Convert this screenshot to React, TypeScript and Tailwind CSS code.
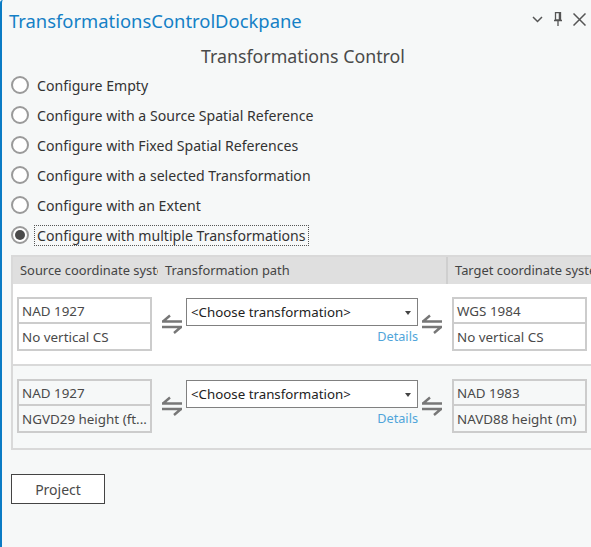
const font = { fontFamily: '"Noto Sans", sans-serif' };

const options = [
  "Configure Empty",
  "Configure with a Source Spatial Reference",
  "Configure with Fixed Spatial References",
  "Configure with a selected Transformation",
  "Configure with an Extent",
  "Configure with multiple Transformations",
];

const rows = [
  { source: ["NAD 1927", "No vertical CS"], target: ["WGS 1984", "No vertical CS"], bg: "bg-white", cellBg: "bg-white" },
  { source: ["NAD 1927", "NGVD29 height (ft..."], target: ["NAD 1983", "NAVD88 height (m)"], bg: "bg-[#f6f8f8]", cellBg: "bg-[#f6f8f8]" },
];

const SwapIcon = () => (
  <svg width="20" height="22" viewBox="0 0 20 22" fill="none" stroke="#777" strokeWidth="2.4" className="shrink-0">
    <path d="M0 9.5h20M1 9.5l7-6" />
    <path d="M0 15h20M19 15l-7 6" />
  </svg>
);

const CrsBox = ({ lines, bg }: { lines: string[]; bg: string }) => (
  <div className={`w-[135px] h-[54px] shrink-0 flex flex-col border-2 border-[#cccccc] ${bg}`}>
    <div className="h-[25px] pl-[3px] border-b-2 border-[#cccccc] text-[13.4px] leading-[24px] text-[#4a4a4a] whitespace-nowrap">{lines[0]}</div>
    <div className="h-[25px] pl-[3px] text-[13.4px] leading-[27px] text-[#4a4a4a] whitespace-nowrap">{lines[1]}</div>
  </div>
);

const App = () => (
  <div className="w-[591px] h-[547px] overflow-hidden bg-[#f6f8f8] border-l-2 border-[#0a7bc4] rounded-tl-[3px] flex flex-col" style={font}>
    {/* dockpane title */}
    <div className="h-[42px] flex items-center pl-[7px] pr-[5px] shrink-0">
      <span className="text-[18.4px] text-[#1480c6] flex-1">TransformationsControlDockpane</span>
      <div className="flex items-center gap-[10px] -mt-[4px]">
        <svg width="11" height="7" viewBox="0 0 11 7" fill="none" stroke="#555" strokeWidth="1.5"><path d="M1 1l4.5 4.5L10 1" /></svg>
        <svg width="10" height="14" viewBox="0 0 10 14" fill="none" stroke="#555"><path d="M2.5 .5h5v7.5h-5zM1 8.5h8M5 9v5" strokeWidth="1.3" /><path d="M6.5 1v7" strokeWidth="1.5" /></svg>
        <svg width="13" height="13" viewBox="0 0 13 13" fill="none" stroke="#555" strokeWidth="1.5"><path d="M.5.5l12 12M12.5.5l-12 12" /></svg>
      </div>
    </div>

    <div className="h-[28px] text-center text-[17.8px] leading-[29px] text-[#4a4a4a] shrink-0 pl-[13px]">Transformations Control</div>

    {/* radio group */}
    <div className="flex flex-col pl-[9px] shrink-0">
      {options.map((o, i) => {
        const on = i === options.length - 1;
        return (
          <div key={o} className="h-[30px] flex items-center">
            <span className="w-[18px] h-[18px] rounded-full border-2 border-[#9a9a9a] bg-white flex items-center justify-center shrink-0">
              {on && <span className="w-[10px] h-[10px] rounded-full bg-[#4a4a4a]" />}
            </span>
            <span className={`ml-[5px] text-[14.1px] leading-[19px] text-[#333] whitespace-nowrap px-[2px] border border-dotted ${on ? "border-[#555]" : "border-transparent"}`}>{o}</span>
          </div>
        );
      })}
    </div>

    {/* transformations table */}
    <div className="ml-[9px] mt-[5px] w-[600px] shrink-0 border-2 border-[#d9d9d9] border-r-0">
      <div className="h-[27px] bg-[#dfdfdf] flex text-[12.9px] leading-[27px] text-[#444]">
        <div className="w-[152px] pl-[7px]">
          <div className="w-[138px] overflow-hidden whitespace-nowrap">Source coordinate system</div>
        </div>
        <div className="w-[283px] border-r-2 border-[#cfcfcf]">Transformation path</div>
        <div className="flex-1 pl-[7px] whitespace-nowrap overflow-hidden">Target coordinate system</div>
      </div>
      {rows.map((r, i) => (
        <div key={i} className={`h-[82px] flex pl-[4px] pt-[13px] ${r.bg} ${i === 0 ? "border-b-2 border-[#d9d9d9]" : ""}`}>
          <CrsBox lines={r.source} bg={r.cellBg} />
          <div className="w-[34px] flex pl-[10px] pt-[15px]"><SwapIcon /></div>
          <div className="w-[232px] shrink-0 flex flex-col pt-[1px]">
            <div className="h-[28px] border border-[#808080] bg-white flex items-center pl-[4px] pr-[6px] pt-[1px] text-[13.3px] text-[#222]">
              <span className="flex-1 whitespace-nowrap">&lt;Choose transformation&gt;</span>
              <span className="w-0 h-0 border-x-[3.5px] border-x-transparent border-t-[4px] border-t-[#444]" />
            </div>
            <div className="text-right text-[12.7px] leading-[20px] text-[#4fa5da]">Details</div>
          </div>
          <div className="w-[34px] flex pl-[4px] pt-[15px]"><SwapIcon /></div>
          <CrsBox lines={r.target} bg={r.cellBg} />
        </div>
      ))}
    </div>

    <button className="ml-[9px] mt-[24px] w-[94px] h-[30px] border border-[#444] bg-white text-[14px] text-[#4a4a4a]">Project</button>
  </div>
);

export default App;
